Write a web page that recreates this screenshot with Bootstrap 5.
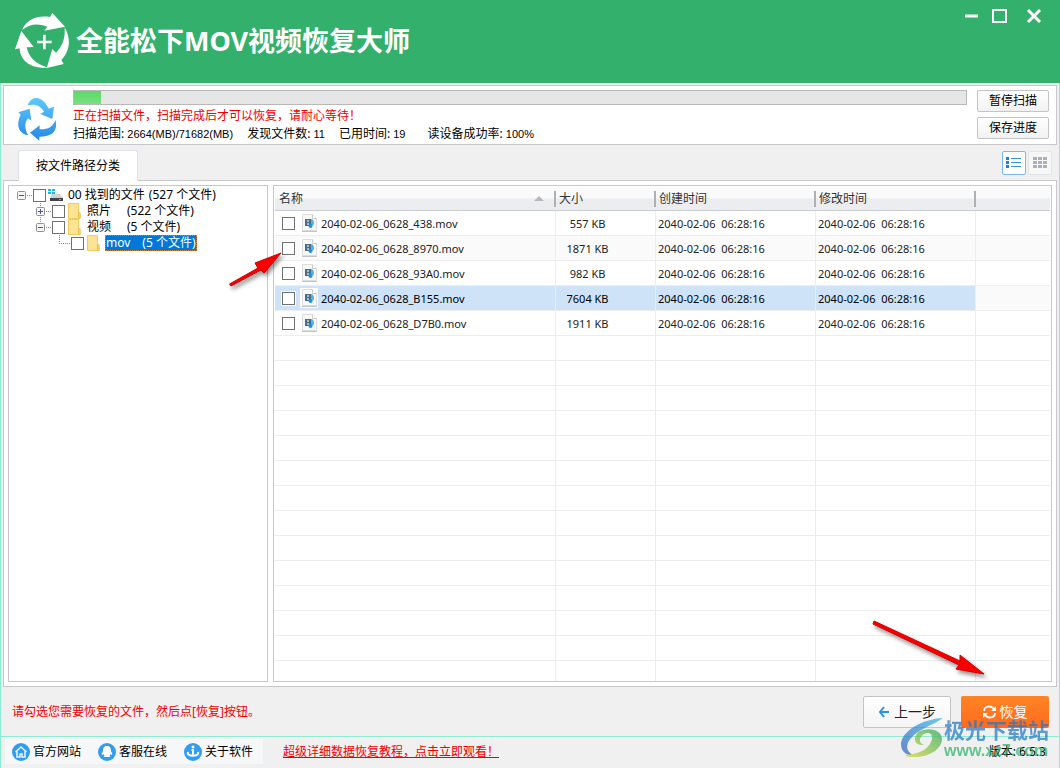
<!DOCTYPE html>
<html lang="zh-CN">
<head>
<meta charset="utf-8">
<meta name="viewport" content="width=device-width, initial-scale=1">
<title>全能松下MOV视频恢复大师</title>
<link href="https://cdn.jsdelivr.net/npm/bootstrap@5.3.0/dist/css/bootstrap.min.css" rel="stylesheet">
<style>
:root{--line:#c8c8cc;--edge:#8cecd4;--red:#f00000}
body{font:12px/16px "Noto Sans","Noto Sans CJK SC",sans-serif;color:#000;background:#f0f0f0;height:100vh}
.titlebar{background:#33b06b;height:83px;padding-left:14px;gap:6px}
.titlebar h1{font-size:27px;line-height:36px;margin:23px 0 0}
.brand{margin-top:12px}
.winbtns{gap:4px;padding:4px 16px}
.winbtns button{width:24px;height:24px}
.winbtns .closer{margin-left:8px}
.plain{border:0;background:none;padding:0}
.shell{border:solid var(--edge);border-width:0 1px;padding:2px 2px 0;min-height:0}
.framed{border:1px solid var(--line);background:#fff}
.scan{height:60px;padding:4px 7px 4px 13px;gap:16px}
.scan .side{gap:5px;margin-left:-6px}
.track{height:15px;border:1px solid #b8b8b8;border-radius:0;background:#e6e6e6}
.track .progress-bar{background:linear-gradient(#5cd868,#78e080)}
.warn{color:var(--red)}
.num{font:11px/14px "Liberation Sans",sans-serif}
.short{line-height:14px}
.stats{gap:14px}
.btn-win{border:1px solid #c4c4c8;border-radius:2px;background:linear-gradient(#fff,#f2f2f2);font-size:12px;line-height:16px;width:72px;height:22px;padding:0;color:#000}
.tabrow{height:36px;padding:5px 5px 0 15px}
.nav-tabs{border:0}
.nav-tabs .nav-link{height:31px;width:120px;padding:6px 0;border:1px solid var(--line);border-bottom:0;border-radius:3px 3px 0 0;color:#000!important;background:#fff;position:relative;z-index:1}
.views{gap:2px;padding-top:1px}
.viewbtn{width:24px;height:24px;border:1px solid #e2e4e6;border-radius:2px;background:#f7f7f7;padding:0}
.viewbtn.active{border-color:#78b8f4;background:#fff}
.viewbtn svg{display:block;margin:auto}
.pane{padding:4px;gap:5px;min-height:0;margin-top:-1px}
.tree{width:260px;padding:1px 8px}
.tree li{height:16px;white-space:nowrap}
.tree svg{display:block;flex:none}
.tree .lv1{padding-left:19px}
.tree .lv2{padding-left:38px}
.box{appearance:none;-webkit-appearance:none;width:13px;height:13px;border:1px solid #707070;background:#fff;margin:0;flex:none;display:block}
.tree .box{margin-right:2px}
.tree label{margin-left:3px;padding:0 1px}
.tree .picked{background:#0078d7;color:#fff;outline:1px dotted #d08030;outline-offset:-1px}
.picked span{margin-left:12px}
.files{padding:1px}
.files table{table-layout:fixed;width:100%;margin:0;border-collapse:separate;border-spacing:0}
.files th{height:24px;padding:0 3px;font-weight:400;background:linear-gradient(#fafafa 0 46%,#ebedef 54%);border-bottom:1px solid #c8ccd0;color:#333;position:relative}
.files th:first-child{padding-left:4px}
.files th:not(:last-child)::after{content:"";position:absolute;right:0;top:4px;width:2px;height:16px;background:#b0b0b0}
.files td{height:25px;padding:1px 2px 0;font-size:11px;line-height:16px;border:solid #ededed;border-width:0 1px 1px 0;color:#222;white-space:pre;overflow:hidden}
.files td:last-child{border-right:0}
.files td:nth-child(2){text-align:center;padding-right:38px}
.files td:first-child{padding:0 0 0 7px}
.files td label{padding-top:2px}
.files .alt td,.files .cur td:last-child{background:#fafafa}
.files .cur td{background:#cfe3f8;color:#000}
.files td .box{outline:1px solid #fff;margin-right:5px}
.files td svg{display:block;background:#fff;margin-right:3px;flex:none}
.sorter{position:absolute;right:12px;top:9px;border:solid transparent;border-width:0 5px 5px;border-bottom-color:#b8b8b8}
.actions{height:49px;padding:0 8px 0 9px;gap:10px}
.btn-big{width:88px;height:32px;font-size:14px;line-height:20px;border-radius:2px;padding:0;display:flex;align-items:center;justify-content:center;gap:4px}
.btn-prev{border:1px solid #c4c4c8;background:linear-gradient(#fff,#f4f4f4);color:#222}
.btn-go{border:0;background:linear-gradient(#ff8424,#ff6a20);color:#fff}
.foot{height:32px;border:1px solid var(--edge);border-bottom:0;padding:2px 13px 0 4px;gap:20px}
.links{background:#f6f7f9;height:25px;width:258px;padding:0 7px;gap:17px}
.links a{color:#000;text-decoration:none;gap:3px}
.note{margin-top:5px}
.stage{position:relative}
.pointer{position:absolute;pointer-events:none;filter:drop-shadow(2px 3px 2px #0007)}
.p-one{left:226px;top:250px}
.p-two{right:72px;bottom:88px}
.stamp{position:absolute;right:11px;bottom:8px;opacity:.72;pointer-events:none}
.stamp b,.stamp i{display:block;font-style:normal}
.stamp b{font:700 21px/26px "Noto Sans CJK SC",sans-serif;color:#2878c0}
.stamp i{font:700 16px/18px "Liberation Sans",sans-serif;color:#28b468}
</style>
<script src="https://cdn.jsdelivr.net/npm/bootstrap@5.3.0/dist/js/bootstrap.bundle.min.js"></script>
</head>
<body class="d-flex flex-column overflow-hidden stage">
<svg width="0" height="0" class="position-absolute" aria-hidden="true">
<defs>
<linearGradient id="blue" gradientUnits="userSpaceOnUse" x1="0" y1="50" x2="0" y2="182"><stop stop-color="#5cccfc"/><stop offset="1" stop-color="#2888e8"/></linearGradient>
<linearGradient id="sky" x1="0" y1="1" x2="1" y2="0"><stop stop-color="#3060c0"/><stop offset="1" stop-color="#38b8e8"/></linearGradient>
<linearGradient id="leaf" x1="0" y1="1" x2="1" y2="0"><stop stop-color="#d8d830"/><stop offset="1" stop-color="#28a860"/></linearGradient>
<symbol id="folder" viewBox="0 0 16 16"><path d="M1.500.5h10v11h1.500v4H1.500z" fill="#ffe394" stroke="#f0cc60"/><path d="M11.500 10.500l1.500-1v6l-1.500-1z" fill="#fff0b8" stroke="#e4bc48"/></symbol>
<symbol id="movie" viewBox="0 0 18 20"><path d="M2.500 1.500h10l4 4v12h-14z" fill="#f8f8f8" stroke="#dcdcdc"/><path d="M12.500 1.500v4h4" fill="#fff" stroke="#ccc"/><path d="M2 18.500h15" stroke="#c4c4c4"/><rect x="5" y="6" width="6" height="7" fill="#4a6e88"/><path d="M7 7h2v2H7zm0 3h2v2H7z" fill="#a8bccc"/><path d="M11 6c2 0 3 2 3 4s-1 3-3 3z" fill="#58b0e8"/><circle cx="10.500" cy="13" r="2" fill="#2090e0"/></symbol>
</defs></svg>

<header class="titlebar d-flex text-white flex-shrink-0">
  <svg width="56" height="58" viewBox="42 36 168 174" class="flex-shrink-0 brand" fill="#fff" aria-hidden="true">
    <path d="M66 90C82 56 112 46 150 51L157 39 195 80 133 92 142 80C112 68 88 72 66 90z"/>
    <path d="M194 82C214 118 210 152 184 180L191 192 140 204 157 147 168 158C186 140 196 118 194 82z"/>
    <path d="M64 93L101 141 80 142C86 172 108 194 146 203 96 208 60 184 59 145L45 148z"/>
    <path d="M129 104h8v18h18v8h-18v18h-8v-18h-18v-8h18z"/>
  </svg>
  <h1 class="fw-bold flex-grow-1">全能松下MOV视频恢复大师</h1>
  <div class="winbtns d-flex">
    <button class="plain" aria-label="最小化"><svg width="24" height="24" viewBox="0 0 24 24"><path d="M9 12h13" stroke="#fff" stroke-width="3"/></svg></button>
    <button class="plain" aria-label="最大化"><svg width="24" height="24" viewBox="0 0 24 24"><path d="M9 6h13v12H9z" fill="none" stroke="#fff" stroke-width="2"/></svg></button>
    <button class="plain closer" aria-label="关闭"><svg width="24" height="24" viewBox="0 0 24 24"><path d="M8 6l12 12M20 6L8 18" stroke="#fff" stroke-width="3"/></svg></button>
  </div>
</header>

<main class="shell d-flex flex-column flex-grow-1">
  <section class="framed scan d-flex flex-shrink-0">
    <svg width="40" height="44" viewBox="50 54 120 132" class="mt-2 flex-shrink-0" fill="url(#blue)" aria-hidden="true">
      <path d="M82 76C90 56 102 53 112 54 128 58 138 72 145 86L161 80 156 117 120 102 131 95C122 78 104 70 82 76z"/>
      <path d="M54 97L88 86 93 122 83 115C72 128 72 148 84 166 54 160 46 136 61 104z"/>
      <path d="M166 120C172 150 160 170 117 170V182L89 158 118 136V148C142 149 156 142 166 120z"/>
    </svg>
    <div class="flex-grow-1">
      <div class="progress track" role="progressbar" aria-label="扫描进度" aria-valuenow="3" aria-valuemin="0" aria-valuemax="100"><div class="progress-bar" style="width:3%"></div></div>
      <div class="warn mt-1 short">正在扫描文件，扫描完成后才可以恢复，请耐心等待！</div>
      <div class="stats d-flex mt-1 short">
        <span>扫描范围: <span class="num">2664(MB)/71682(MB)</span></span>
        <span>发现文件数: <span class="num">11</span></span>
        <span>已用时间: <span class="num">19</span></span>
        <span class="ms-2">读设备成功率: <span class="num">100%</span></span>
      </div>
    </div>
    <div class="side d-flex flex-column">
      <button class="btn btn-win">暂停扫描</button>
      <button class="btn btn-win">保存进度</button>
    </div>
  </section>

  <div class="tabrow d-flex justify-content-between flex-shrink-0">
    <ul class="nav nav-tabs"><li class="nav-item"><button class="nav-link active">按文件路径分类</button></li></ul>
    <div class="views d-flex">
      <button class="viewbtn active" aria-label="列表"><svg width="16" height="14" viewBox="0 0 16 14"><path d="M0 1h3v3H0zm0 4h3v3H0zm0 4h3v3H0z" fill="#1880e0"/><path d="M5 2.500h10M5 6.500h10M5 10.500h10" stroke="#3890e0"/></svg></button>
      <button class="viewbtn" aria-label="图标"><svg width="14" height="14" viewBox="0 0 14 14"><path d="M0 1h4v3H0zm5 0h4v3H5zm5 0h4v3h-4zM0 5h4v3H0zm5 0h4v3H5zm5 0h4v3h-4zM0 9h4v3H0zm5 0h4v3H5zm5 0h4v3h-4z" fill="#acb0b8"/></svg></button>
    </div>
  </div>

  <section class="framed pane d-flex flex-grow-1">
    <ul class="framed tree list-unstyled mb-0 flex-shrink-0">
      <li class="d-flex align-items-center"><svg width="16" height="16"><rect x=".5" y="4.500" width="8" height="8" rx="1" fill="#f4f4f4" stroke="#909090"/><path d="M2 8.500h5" stroke="#4058a0"/><path d="M10 8.500h6" stroke="#888" stroke-dasharray="1 1"/></svg><input class="box" type="checkbox" id="t0"><svg width="16" height="16"><path d="M0 2h3v2H0zm4 0h3v2H4zM0 5h3v2H0zm4 0h3v2H4z" fill="#20b8e8"/><path d="M4 7h8l3 4H2z" fill="#d0d0d0"/><path d="M2 11h13v3H2z" fill="#404448"/><path d="M11 12.500h2" stroke="#40d060"/></svg><label for="t0">00 找到的文件<span class="ms-1">(527 个文件)</span></label></li>
      <li class="d-flex align-items-center lv1"><svg width="16" height="16"><path d="M4.500 0v16M10 8.500h6" stroke="#888" stroke-dasharray="1 1"/><rect x=".5" y="4.500" width="8" height="8" rx="1" fill="#f4f4f4" stroke="#909090"/><path d="M2 8.500h5M4.500 6v5" stroke="#4058a0"/></svg><input class="box" type="checkbox" id="t1"><svg width="16" height="16"><use href="#folder"/></svg><label for="t1">照片<span class="ms-3">(522 个文件)</span></label></li>
      <li class="d-flex align-items-center lv1"><svg width="16" height="16"><path d="M4.500 0v4M10 8.500h6" stroke="#888" stroke-dasharray="1 1"/><rect x=".5" y="4.500" width="8" height="8" rx="1" fill="#f4f4f4" stroke="#909090"/><path d="M2 8.500h5" stroke="#4058a0"/></svg><input class="box" type="checkbox" id="t2"><svg width="16" height="16"><use href="#folder"/></svg><label for="t2">视频<span class="ms-3">(5 个文件)</span></label></li>
      <li class="d-flex align-items-center lv2"><svg width="16" height="16"><path d="M4.500 0v8.500H16" fill="none" stroke="#888" stroke-dasharray="1 1"/></svg><input class="box" type="checkbox" id="t3"><svg width="16" height="16"><use href="#folder"/></svg><label for="t3" class="picked">mov<span>(5 个文件)</span></label></li>
    </ul>

    <div class="framed files flex-grow-1 overflow-hidden">
      <table>
        <colgroup><col style="width:281px"><col style="width:100px"><col style="width:160px"><col style="width:160px"><col></colgroup>
        <thead><tr><th>名称<span class="sorter"></span></th><th>大小</th><th>创建时间</th><th>修改时间</th><th></th></tr></thead>
        <tbody>
          <tr><td><div class="d-flex align-items-center"><input class="box" type="checkbox" id="f1"><svg width="18" height="20"><use href="#movie"/></svg><label for="f1">2040-02-06_0628_438.mov</label></div></td><td>557 KB</td><td>2040-02-06  06:28:16</td><td>2040-02-06  06:28:16</td><td></td></tr>
          <tr class="alt"><td><div class="d-flex align-items-center"><input class="box" type="checkbox" id="f2"><svg width="18" height="20"><use href="#movie"/></svg><label for="f2">2040-02-06_0628_8970.mov</label></div></td><td>1871 KB</td><td>2040-02-06  06:28:16</td><td>2040-02-06  06:28:16</td><td></td></tr>
          <tr><td><div class="d-flex align-items-center"><input class="box" type="checkbox" id="f3"><svg width="18" height="20"><use href="#movie"/></svg><label for="f3">2040-02-06_0628_93A0.mov</label></div></td><td>982 KB</td><td>2040-02-06  06:28:16</td><td>2040-02-06  06:28:16</td><td></td></tr>
          <tr class="cur"><td><div class="d-flex align-items-center"><input class="box" type="checkbox" id="f4"><svg width="18" height="20"><use href="#movie"/></svg><label for="f4">2040-02-06_0628_B155.mov</label></div></td><td>7604 KB</td><td>2040-02-06  06:28:16</td><td>2040-02-06  06:28:16</td><td></td></tr>
          <tr><td><div class="d-flex align-items-center"><input class="box" type="checkbox" id="f5"><svg width="18" height="20"><use href="#movie"/></svg><label for="f5">2040-02-06_0628_D7B0.mov</label></div></td><td>1911 KB</td><td>2040-02-06  06:28:16</td><td>2040-02-06  06:28:16</td><td></td></tr>
          <tr><td></td><td></td><td></td><td></td><td></td></tr>
          <tr><td></td><td></td><td></td><td></td><td></td></tr>
          <tr><td></td><td></td><td></td><td></td><td></td></tr>
          <tr><td></td><td></td><td></td><td></td><td></td></tr>
          <tr><td></td><td></td><td></td><td></td><td></td></tr>
          <tr><td></td><td></td><td></td><td></td><td></td></tr>
          <tr><td></td><td></td><td></td><td></td><td></td></tr>
          <tr><td></td><td></td><td></td><td></td><td></td></tr>
          <tr><td></td><td></td><td></td><td></td><td></td></tr>
          <tr><td></td><td></td><td></td><td></td><td></td></tr>
          <tr><td></td><td></td><td></td><td></td><td></td></tr>
          <tr><td></td><td></td><td></td><td></td><td></td></tr>
          <tr><td></td><td></td><td></td><td></td><td></td></tr>
          <tr><td></td><td></td><td></td><td></td><td></td></tr>
        </tbody>
      </table>
    </div>
  </section>

  <div class="actions d-flex align-items-center flex-shrink-0">
    <span class="warn me-auto">请勾选您需要恢复的文件，然后点[恢复]按钮。</span>
    <button class="btn btn-big btn-prev"><svg width="12" height="12" viewBox="0 0 12 12"><path d="M6 1L2 6l4 5M2 6h9" fill="none" stroke="#2c90e8" stroke-width="2"/></svg>上一步</button>
    <button class="btn btn-big btn-go"><svg width="13" height="14" viewBox="0 0 13 14"><path d="M1 6c0-5 7-6 10-2M12 8c0 5-7 6-10 2" fill="none" stroke="#fff" stroke-width="2"/><path d="M13 1v5H8zM0 13V8h5z" fill="#fff"/></svg>恢复</button>
  </div>
</main>

<footer class="foot d-flex align-items-start flex-shrink-0">
  <nav class="links d-flex align-items-center">
    <a href="#" class="d-flex align-items-center"><svg width="18" height="18" viewBox="0 0 18 18"><circle cx="9" cy="9" r="9" fill="#329cf0"/><path d="M3.500 9L9 4l5.500 5M5 8.500V14h3v-3h2v3h3V8.500" fill="none" stroke="#e8f6ff" stroke-width="1.500"/></svg>官方网站</a>
    <a href="#" class="d-flex align-items-center"><svg width="18" height="18" viewBox="0 0 18 18"><circle cx="9" cy="9" r="9" fill="#329cf0"/><path d="M9 3c3 0 4 2 4 5l1.500 3-1 1-1-1-1 2 1 1H5.500l1-1-1-2-1 1-1-1L5 8c0-3 1-5 4-5z" fill="#fff"/></svg>客服在线</a>
    <a href="#" class="d-flex align-items-center"><svg width="18" height="18" viewBox="0 0 18 18"><circle cx="9" cy="9" r="9" fill="#329cf0"/><circle cx="9" cy="4" r="1.500" fill="#fff"/><path d="M7.500 7H9v4.500M4 9c-2 5 12 5 10 0" fill="none" stroke="#fff" stroke-width="2"/></svg>关于软件</a>
  </nav>
  <a href="#" class="warn note">超级详细数据恢复教程，点击立即观看！</a>
  <span class="ms-auto note">版本: 6.5.3</span>
</footer>

<svg class="pointer p-one" width="56" height="38" viewBox="0 0 56 38"><path d="M3.500 34L32 18l-3-5 26-10-17 20-3-3L5 36z" fill="#f80000" stroke="#d00000"/></svg>
<svg class="pointer p-two" width="116" height="62" viewBox="0 0 116 62"><path d="M2 3l86 40 0-6 24 19-28-5 3-4L1 6z" fill="#f80000" stroke="#d00000"/></svg>
<div class="stamp d-flex align-items-center">
  <svg width="44" height="42" viewBox="0 0 44 42"><path d="M43 1C22 2 2 14 1 27c0 7 5 12 12 11C5 34 5 26 14 18 22 11 33 8 43 1z" fill="url(#sky)"/><path d="M18 15c-6 7-3 14 6 13-6-2-5-8 0-11 7-3 10 2 7 8-3 7-11 12-26 13 2 2 4 2 7 2 15 1 30-7 30-18 0-9-13-13-24-7z" fill="url(#leaf)"/></svg>
  <div><b>极光下载站</b><i>www.xz7.com</i></div>
</div>
</body>
</html>
